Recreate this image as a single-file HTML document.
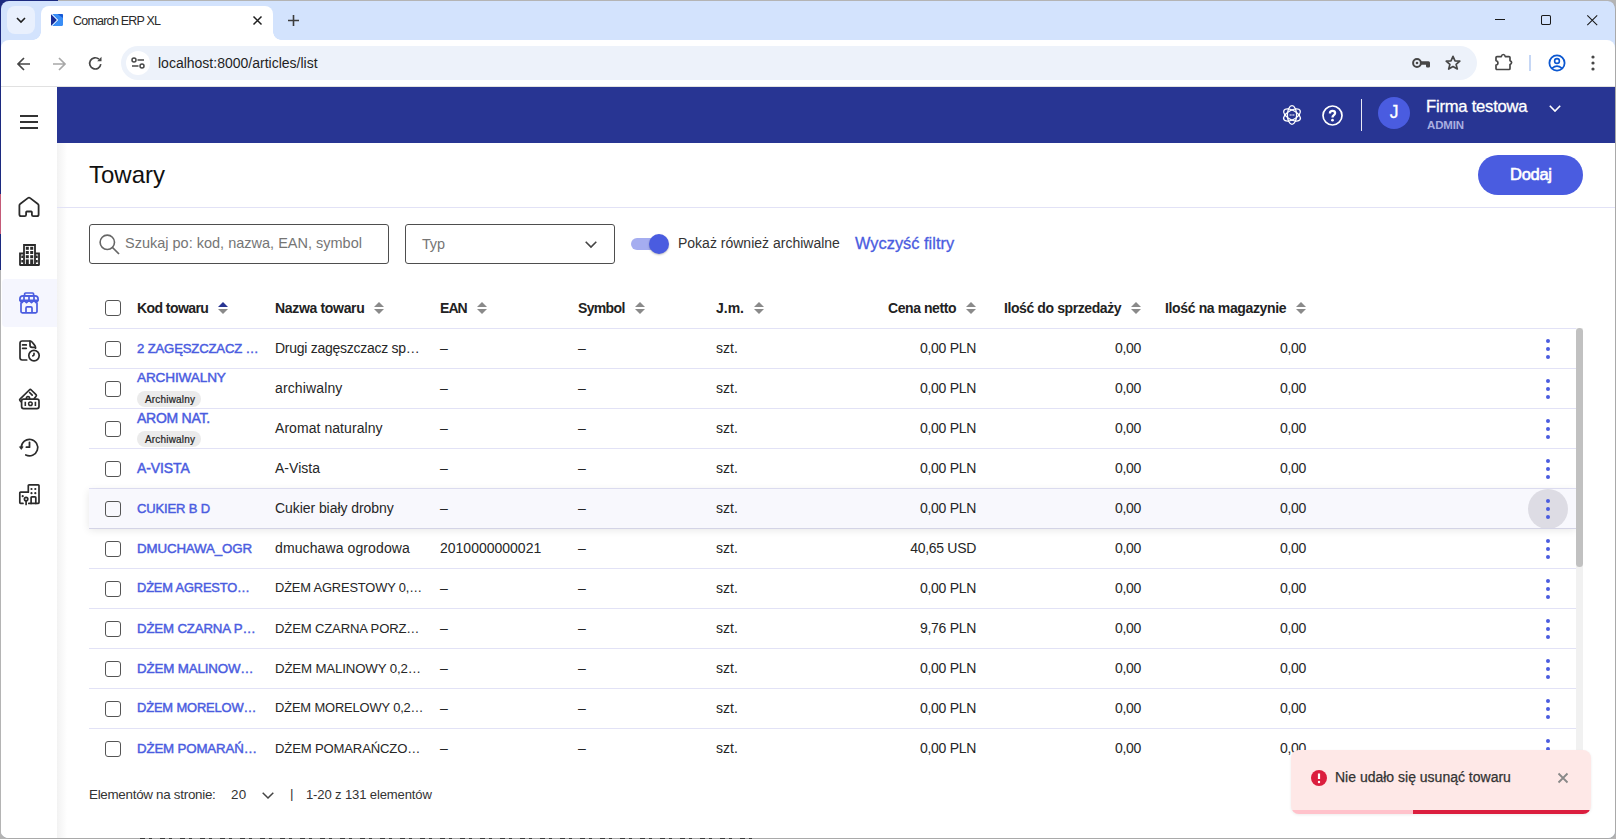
<!DOCTYPE html>
<html><head><meta charset="utf-8">
<style>
*{box-sizing:border-box;margin:0;padding:0}
html,body{width:1616px;height:839px;overflow:hidden;background:#b4b4b4;font-family:"Liberation Sans",sans-serif;position:relative}
.abs{position:absolute}
#topstrip{position:absolute;left:0;top:0;width:58px;height:20px;background:#1c2a80}
#leftstrip{position:absolute;left:0;top:0;width:1px;height:270px;background:#1c2a80}
#redstrip{position:absolute;left:0;top:194px;width:1px;height:40px;background:#c45a78}
#win{position:absolute;left:1px;top:1px;width:1615px;height:838px;background:#d3e3fd;border-radius:8px;overflow:hidden;border-right:1px solid #a9a9a9;border-bottom:1px solid #a9a9a9}
#pg{position:absolute;left:-1px;top:-1px;width:1616px;height:839px}
.t{position:absolute;white-space:nowrap;line-height:1}
svg{position:absolute;overflow:visible}
</style></head>
<body>
<div id="topstrip"></div><div id="leftstrip"></div><div id="redstrip"></div>
<div id="win"><div id="pg">
  <!-- TAB STRIP -->
  <div class="abs" style="left:7px;top:6px;width:28px;height:28px;border-radius:8px;background:#e9f0fd"></div>
  <svg style="left:16px;top:17px" width="10" height="6" viewBox="0 0 10 6"><path d="M1 1 L5 5 L9 1" fill="none" stroke="#1f1f1f" stroke-width="1.6"/></svg>
  <div class="abs" style="left:41px;top:6px;width:232px;height:35px;background:#fff;border-radius:8px 8px 0 0"></div>
  <div class="abs" style="left:33px;top:32px;width:8px;height:8px;background:radial-gradient(circle at 0 0,#d3e3fd 7.5px,#fff 8px)"></div>
  <div class="abs" style="left:273px;top:32px;width:8px;height:8px;background:radial-gradient(circle at 100% 0,#d3e3fd 7.5px,#fff 8px)"></div>
  <svg style="left:51px;top:14px" width="12" height="12" viewBox="0 0 12 12"><rect x="0" y="0" width="12" height="12" rx="1.5" fill="#3a8ef6"/><path d="M6.5 0 H11 Q12 0 12 1 V4 Z" fill="#1558d6"/><path d="M0 0 L6 6 L0 12 Z" fill="#1a2c96"/><path d="M0 0 L1.2 0 L7.2 6 L1.2 12 L0 12 L6 6Z" fill="#fff"/></svg>
  <div class="t" style="left:73px;top:15px;font-size:12.5px;letter-spacing:-0.8px;color:#2a2a2a">Comarch ERP XL</div>
  <svg style="left:253px;top:16px" width="9" height="9" viewBox="0 0 9 9"><path d="M0.5 0.5 L8.5 8.5 M8.5 0.5 L0.5 8.5" stroke="#1f1f1f" stroke-width="1.5"/></svg>
  <svg style="left:288px;top:15px" width="11" height="11" viewBox="0 0 11 11"><path d="M5.5 0 V11 M0 5.5 H11" stroke="#3c3c3c" stroke-width="1.6"/></svg>
  <!-- window controls -->
  <svg style="left:1495px;top:19px" width="11" height="1"><path d="M0 0.5 H10" stroke="#1a1a1a" stroke-width="1"/></svg>
  <svg style="left:1541px;top:15px" width="11" height="11"><rect x="0.5" y="0.5" width="9" height="9" rx="1.2" fill="none" stroke="#1a1a1a" stroke-width="1.05"/></svg>
  <svg style="left:1587px;top:15px" width="11" height="11"><path d="M0.3 0.3 L10.2 10.2 M10.2 0.3 L0.3 10.2" stroke="#1a1a1a" stroke-width="1.05"/></svg>

  <!-- TOOLBAR -->
  <div class="abs" style="left:1px;top:40px;width:1614px;height:47px;background:#fff;border-radius:8px 8px 0 0"></div>
  <div class="abs" style="left:41px;top:30px;width:232px;height:12px;background:#fff"></div>
  <div class="abs" style="left:1px;top:86px;width:1614px;height:1px;background:#e1e1e1"></div>
  <svg style="left:17px;top:57px" width="14" height="14" viewBox="0 0 14 14"><path d="M13 7 H1.5 M7 1 L1 7 L7 13" fill="none" stroke="#474747" stroke-width="1.7"/></svg>
  <svg style="left:52px;top:57px" width="14" height="14" viewBox="0 0 14 14"><path d="M1 7 H12.5 M7 1 L13 7 L7 13" fill="none" stroke="#a8a8a8" stroke-width="1.7"/></svg>
  <svg style="left:88px;top:56px" width="15" height="15" viewBox="0 0 15 15"><path d="M12.8 8.2 A5.6 5.6 0 1 1 11 3.2" fill="none" stroke="#474747" stroke-width="1.7"/><path d="M13.5 0.8 V5.2 H9.2 Z" fill="#474747"/></svg>
  <div class="abs" style="left:121px;top:46px;width:1356px;height:34px;border-radius:17px;background:#edf2fa"></div>
  <div class="abs" style="left:126px;top:51px;width:24px;height:24px;border-radius:12px;background:#fff"></div>
  <svg style="left:131px;top:57px" width="14" height="12" viewBox="0 0 14 12"><circle cx="3" cy="3" r="2" fill="none" stroke="#474747" stroke-width="1.5"/><path d="M6.5 3 H13" stroke="#474747" stroke-width="1.5"/><circle cx="11" cy="9" r="2" fill="none" stroke="#474747" stroke-width="1.5"/><path d="M1 9 H7.5" stroke="#474747" stroke-width="1.5"/></svg>
  <div class="t" style="left:158px;top:56px;font-size:14px;color:#1f1f1f">localhost:8000/articles/list</div>
  <svg style="left:1412px;top:58px" width="19" height="11" viewBox="0 0 19 11"><circle cx="5" cy="5" r="3.9" fill="none" stroke="#474747" stroke-width="2"/><circle cx="5" cy="5" r="1.3" fill="#474747"/><path d="M8.5 3.3 H16.5 Q18 3.3 18 4.8 V8.3 Q18 9.6 16.8 9.6 H15.2 Q14 9.6 14 8.3 V6.7 H8.5 Z" fill="#474747"/></svg>
  <svg style="left:1445px;top:55px" width="16" height="15" viewBox="0 0 16 15"><path d="M8 1.3 L10 5.9 L14.8 6.2 L11.1 9.4 L12.3 14 L8 11.5 L3.7 14 L4.9 9.4 L1.2 6.2 L6 5.9Z" fill="none" stroke="#474747" stroke-width="1.7" stroke-linejoin="round"/></svg>
  <svg style="left:1495px;top:53px" width="18" height="18" viewBox="0 0 18 18"><path d="M2 3.6 H6.3 Q6.8 1.5 8.3 1.5 Q9.8 1.5 10.3 3.6 H14 Q15 3.6 15 4.6 V7.6 Q16.6 8.3 16.6 9.6 Q16.6 10.9 15 11.6 V15.5 Q15 16.5 14 16.5 H2 Q1 16.5 1 15.5 V12.2 Q3 11.8 3 9.9 Q3 8 1 7.6 V4.6 Q1 3.6 2 3.6 Z" fill="none" stroke="#474747" stroke-width="1.7" stroke-linejoin="round"/></svg>
  <div class="abs" style="left:1529px;top:55px;width:1.5px;height:16px;background:#c6d7f5"></div>
  <svg style="left:1548px;top:54px" width="18" height="18" viewBox="0 0 18 18"><circle cx="9" cy="9" r="7.6" fill="none" stroke="#0b57d0" stroke-width="1.8"/><circle cx="9" cy="7" r="2.4" fill="none" stroke="#0b57d0" stroke-width="1.6"/><path d="M4.2 14.2 Q9 10.2 13.8 14.2" fill="none" stroke="#0b57d0" stroke-width="1.6"/></svg>
  <svg style="left:1590px;top:55px" width="6" height="16"><circle cx="3" cy="2" r="1.6" fill="#474747"/><circle cx="3" cy="8" r="1.6" fill="#474747"/><circle cx="3" cy="14" r="1.6" fill="#474747"/></svg>

  <!-- APP -->
  <div class="abs" style="left:1px;top:87px;width:1614px;height:752px;background:#fff"></div>
<div class="abs" style="left:1px;top:87px;width:56px;height:752px;background:#fff"></div>
<div class="abs" style="left:57px;top:143px;width:10px;height:696px;background:linear-gradient(90deg,#f2f2f2,#fff)"></div>
<div class="abs" style="left:57px;top:87px;width:1558px;height:56px;background:#283593"></div>
<svg style="left:20px;top:115px" width="18" height="14"><path d="M0 1 H18 M0 7 H18 M0 13 H18" stroke="#333" stroke-width="2"/></svg>
<div class="abs" style="left:2px;top:279px;width:55px;height:48px;background:#f5f6fe;border-radius:4px 0 0 4px"></div>
<svg style="left:18px;top:196px" width="22" height="22" viewBox="0 0 22 22"><path d="M1.4 9.4 Q1.4 8.5 2.1 8 L9.8 2.1 Q11 1.2 12.2 2.1 L19.9 8 Q20.6 8.5 20.6 9.4 V18.5 Q20.6 20.2 18.9 20.2 H15.3 Q13.9 20.2 13.9 18.8 V16.3 Q13.9 15.5 13.1 15.5 H8.9 Q8.1 15.5 8.1 16.3 V18.8 Q8.1 20.2 6.7 20.2 H3.1 Q1.4 20.2 1.4 18.5 Z" fill="none" stroke="#2b2b2b" stroke-width="1.8" stroke-linejoin="round"/></svg>
<svg style="left:19px;top:244px" width="21" height="22" viewBox="0 0 21 22"><path d="M5 21 V1 H16 V21 M1 21 V9.5 H5 M16 9.5 H20 V21 M0.5 21 H20.5" fill="none" stroke="#2b2b2b" stroke-width="1.8"/><g fill="#2b2b2b"><rect x="6.8" y="2.8" width="3" height="3"/><rect x="11.2" y="2.8" width="3" height="3"/><rect x="6.8" y="7" width="3" height="3"/><rect x="11.2" y="7" width="3" height="3"/><rect x="6.8" y="11.2" width="3" height="3"/><rect x="11.2" y="11.2" width="3" height="3"/><rect x="6.8" y="15.4" width="3" height="5"/><rect x="11.2" y="15.4" width="3" height="5"/><rect x="2.3" y="11.5" width="2" height="2.5"/><rect x="2.3" y="16" width="2" height="2.5"/><rect x="16.7" y="11.5" width="2" height="2.5"/><rect x="16.7" y="16" width="2" height="2.5"/></g></svg>
<svg style="left:19px;top:292px" width="21" height="22" viewBox="0 0 21 22"><g fill="none" stroke="#4a5ce0" stroke-width="1.7" stroke-linejoin="round" stroke-linecap="round"><rect x="5.6" y="1" width="9" height="2.8" rx="1"/><path d="M0.9 8.4 V7 Q0.9 3.8 4.1 3.8 H15.9 Q19.1 3.8 19.1 7 V8.4 Z M0.9 8.4 L2.95 10.6 L5 8.4 L7.5 10.6 L10 8.4 L12.5 10.6 L15 8.4 L17.05 10.6 L19.1 8.4 M5 3.8 V8.4 M10 3.8 V8.4 M15 3.8 V8.4"/><path d="M2 11.2 V19.6 Q2 20.9 3.3 20.9 H16.7 Q18 20.9 18 19.6 V11.2 M7 20.9 V16 Q7 14.8 8.2 14.8 H11.8 Q13 14.8 13 16 V20.9"/></g></svg>
<svg style="left:19px;top:340px" width="21" height="22" viewBox="0 0 21 22"><g fill="none" stroke="#2b2b2b" stroke-width="1.7" stroke-linecap="round" stroke-linejoin="round"><path d="M7.7 20 H3.2 Q1 20 1 17.8 V3.2 Q1 1 3.2 1 H10.8 Q12.1 1 13 2 L15.6 5.1 Q16.5 6.1 16.5 7.6 V8.2"/><path d="M11 1.2 V5.3 Q11 7.3 13 7.3 H16.3"/><path d="M3.6 4.9 H7.3 M3.6 8.3 H7.3"/><circle cx="15" cy="15.6" r="5.2"/><path d="M15 13.3 V14.6 Q15 15.8 13.8 15.8"/></g></svg>
<svg style="left:19px;top:389px" width="21" height="21" viewBox="0 0 21 21"><path d="M2.3 12.8 L1 11.6 Q0.3 10.9 1 10.2 L10.3 1 Q11.3 0 12.3 1 L17 5.7 Q17.8 6.5 17.1 7.3 L15.2 9.6 M7.3 10 Q7.3 7.5 9 7.5 Q10.7 7.5 10.7 10 M10.6 3.5 L13.2 6.1" fill="none" stroke="#2b2b2b" stroke-width="1.7" stroke-linejoin="round" stroke-linecap="round"/><rect x="2.6" y="10.2" width="17.4" height="9.4" rx="2" fill="none" stroke="#2b2b2b" stroke-width="1.7"/><path d="M6.3 12.7 V17 M16.4 12.7 V17" stroke="#2b2b2b" stroke-width="1.6"/><circle cx="11.4" cy="14.8" r="1.8" fill="none" stroke="#2b2b2b" stroke-width="1.5"/></svg>
<svg style="left:19px;top:437px" width="21" height="21" viewBox="0 0 21 21"><path d="M2.3 10.3 A8.2 8.2 0 1 1 6.8 17.9" fill="none" stroke="#2b2b2b" stroke-width="1.7" stroke-linecap="round"/><path d="M10.5 5.3 V10.2 H7.4" fill="none" stroke="#2b2b2b" stroke-width="1.8" stroke-linecap="round" stroke-linejoin="round"/><path d="M0.5 9.8 L4.1 9.8 L2.3 12.4 Z" fill="#2b2b2b" stroke="#2b2b2b" stroke-width="0.8" stroke-linejoin="round"/></svg>
<svg style="left:19px;top:484px" width="21" height="21" viewBox="0 0 21 21"><g fill="none" stroke="#2b2b2b" stroke-width="1.7" stroke-linecap="round" stroke-linejoin="round"><path d="M9.3 8.2 V1.6 Q9.3 0.8 10.1 0.8 H19.2 Q20 0.8 20 1.6 V18.6 Q20 19.4 19.2 19.4 H9.8"/><path d="M9.3 8.2 H1.6 Q0.8 8.2 0.8 9 V18.6 Q0.8 19.4 1.6 19.4 H4"/><path d="M12.1 19.4 V13.6 Q12.1 12.8 12.9 12.8 H16 Q16.8 12.8 16.8 13.6 V19.4"/><circle cx="7.1" cy="15.1" r="1.7"/><path d="M7.1 16.8 V20.4"/></g><g fill="#2b2b2b"><circle cx="12.5" cy="5" r="1.1"/><circle cx="16.3" cy="5" r="1.1"/><circle cx="12.5" cy="9.2" r="1.1"/><circle cx="16.3" cy="9.2" r="1.1"/><circle cx="3.7" cy="12.2" r="1.1"/></g></svg>
<svg style="left:1282px;top:105px" width="20" height="20" viewBox="0 0 20 20"><g fill="none" stroke="#fff" stroke-width="1.3"><ellipse cx="10" cy="10" rx="9.3" ry="4.6" transform="rotate(90 10 10)"/><ellipse cx="10" cy="10" rx="9.3" ry="4.6" transform="rotate(30 10 10)"/><ellipse cx="10" cy="10" rx="9.3" ry="4.6" transform="rotate(-30 10 10)"/></g><circle cx="8.2" cy="10" r="0.7" fill="#fff"/><circle cx="10" cy="10" r="0.7" fill="#fff"/><circle cx="11.8" cy="10" r="0.7" fill="#fff"/></svg>
<svg style="left:1322px;top:105px" width="21" height="21" viewBox="0 0 21 21"><circle cx="10.5" cy="10.5" r="9.5" fill="none" stroke="#fff" stroke-width="1.7"/><path d="M7.9 8.4 Q7.9 5.8 10.5 5.8 Q13.1 5.8 13.1 8.1 Q13.1 9.5 11.5 10.4 Q10.5 11 10.5 12.4" fill="none" stroke="#fff" stroke-width="2.3"/><circle cx="10.5" cy="15.2" r="1.35" fill="#fff"/></svg>
<div class="abs" style="left:1360.5px;top:99px;width:1.5px;height:32px;background:#e8e9f5"></div>
<div class="abs" style="left:1378px;top:97px;width:32px;height:32px;border-radius:16px;background:#4a5ce0"></div>
<div class="t" style="left:1378px;top:104px;width:32px;text-align:center;font-size:17.5px;color:#fff;-webkit-text-stroke:0.3px #fff">J</div>
<div class="t" style="left:1426px;top:98.50px;font-size:16.6px;color:#fff;-webkit-text-stroke:0.3px #fff;letter-spacing:-0.217px">Firma testowa</div>
<div class="t" style="left:1427px;top:119.50px;font-size:11.47px;font-weight:700;color:#a9aee0;letter-spacing:-0.150px">ADMIN</div>
<svg style="left:1549px;top:105px" width="12" height="8" viewBox="0 0 12 8"><path d="M0.8 0.8 L6 6 L11.2 0.8" fill="none" stroke="#fff" stroke-width="1.6"/></svg>
<div class="t" style="left:89px;top:163px;font-size:24px;color:#111">Towary</div>
<div class="abs" style="left:1478px;top:155px;width:105px;height:40px;border-radius:20px;background:#4a5ce0"></div>
<div class="t" style="left:1510px;top:166.00px;font-size:16.5px;color:#fff;-webkit-text-stroke:0.6px #fff;letter-spacing:-0.281px">Dodaj</div>
<div class="abs" style="left:57px;top:207px;width:1558px;height:1px;background:#e2e2f6"></div>
<div class="abs" style="left:89px;top:224px;width:300px;height:40px;border:1.5px solid #4e4e4e;border-radius:3px"></div>
<svg style="left:99px;top:234px" width="21" height="21" viewBox="0 0 21 21"><circle cx="8.3" cy="8.3" r="7.2" fill="none" stroke="#666" stroke-width="1.6"/><path d="M13.5 13.5 L20 20" stroke="#666" stroke-width="1.7"/></svg>
<div class="t" style="left:125px;top:236px;font-size:14.5px;color:#757575">Szukaj po: kod, nazwa, EAN, symbol</div>
<div class="abs" style="left:405px;top:224px;width:210px;height:40px;border:1.5px solid #4e4e4e;border-radius:3px"></div>
<div class="t" style="left:422px;top:237.00px;font-size:14.45px;color:#757575;letter-spacing:-0.150px">Typ</div>
<svg style="left:585px;top:241px" width="12" height="7" viewBox="0 0 12 7"><path d="M0.7 0.7 L6 6 L11.3 0.7" fill="none" stroke="#444" stroke-width="1.6"/></svg>
<div class="abs" style="left:631px;top:238px;width:36px;height:12px;border-radius:6px;background:#a5adf0"></div>
<div class="abs" style="left:649px;top:234px;width:20px;height:20px;border-radius:10px;background:#4a5ce0;box-shadow:0 1px 2px rgba(0,0,0,.25)"></div>
<div class="t" style="left:678px;top:236px;font-size:14px;color:#333">Pokaż również archiwalne</div>
<div class="t" style="left:855px;top:235px;font-size:16.4px;color:#4a5ce0;-webkit-text-stroke:0.3px #4a5ce0">Wyczyść filtry</div>
<div class="abs" style="left:105px;top:300px;width:16px;height:16px;border:1.6px solid #555;border-radius:3px"></div>
<div class="t" style="left:137px;top:301.00px;font-size:14px;font-weight:700;color:#222;letter-spacing:-0.567px">Kod towaru</div>
<svg style="left:218px;top:302px" width="10" height="12" viewBox="0 0 10 12"><path d="M5 0 L10 5 H0Z" fill="#283593"/><path d="M5 12 L10 7 H0Z" fill="#8a8a8a"/></svg>
<div class="t" style="left:275px;top:301.00px;font-size:14px;font-weight:700;color:#222;letter-spacing:-0.324px">Nazwa towaru</div>
<svg style="left:374px;top:302px" width="10" height="12" viewBox="0 0 10 12"><path d="M5 0 L10 5 H0Z" fill="#8a8a8a"/><path d="M5 12 L10 7 H0Z" fill="#8a8a8a"/></svg>
<div class="t" style="left:440px;top:301.00px;font-size:14px;font-weight:700;color:#222;letter-spacing:-0.931px">EAN</div>
<svg style="left:477px;top:302px" width="10" height="12" viewBox="0 0 10 12"><path d="M5 0 L10 5 H0Z" fill="#8a8a8a"/><path d="M5 12 L10 7 H0Z" fill="#8a8a8a"/></svg>
<div class="t" style="left:578px;top:301.00px;font-size:14px;font-weight:700;color:#222;letter-spacing:-0.656px">Symbol</div>
<svg style="left:635px;top:302px" width="10" height="12" viewBox="0 0 10 12"><path d="M5 0 L10 5 H0Z" fill="#8a8a8a"/><path d="M5 12 L10 7 H0Z" fill="#8a8a8a"/></svg>
<div class="t" style="left:716px;top:301.00px;font-size:14px;font-weight:700;color:#222;letter-spacing:-0.005px">J.m.</div>
<svg style="left:754px;top:302px" width="10" height="12" viewBox="0 0 10 12"><path d="M5 0 L10 5 H0Z" fill="#8a8a8a"/><path d="M5 12 L10 7 H0Z" fill="#8a8a8a"/></svg>
<div class="t" style="left:888px;top:301.00px;font-size:14px;font-weight:700;color:#222;letter-spacing:-0.427px">Cena netto</div>
<svg style="left:966px;top:302px" width="10" height="12" viewBox="0 0 10 12"><path d="M5 0 L10 5 H0Z" fill="#8a8a8a"/><path d="M5 12 L10 7 H0Z" fill="#8a8a8a"/></svg>
<div class="t" style="left:1004px;top:301.00px;font-size:14px;font-weight:700;color:#222;letter-spacing:-0.405px">Ilość do sprzedaży</div>
<svg style="left:1131px;top:302px" width="10" height="12" viewBox="0 0 10 12"><path d="M5 0 L10 5 H0Z" fill="#8a8a8a"/><path d="M5 12 L10 7 H0Z" fill="#8a8a8a"/></svg>
<div class="t" style="left:1165px;top:301.00px;font-size:14px;font-weight:700;color:#222;letter-spacing:-0.359px">Ilość na magazynie</div>
<svg style="left:1296px;top:302px" width="10" height="12" viewBox="0 0 10 12"><path d="M5 0 L10 5 H0Z" fill="#8a8a8a"/><path d="M5 12 L10 7 H0Z" fill="#8a8a8a"/></svg>
<div class="abs" style="left:89px;top:328px;width:1487px;height:1px;background:#e2e2f6"></div>
<div class="abs" style="left:57px;top:329px;width:1530px;height:439px;overflow:hidden">
<div class="abs" style="left:48px;top:12px;width:16px;height:16px;border:1.6px solid #555;border-radius:3px"></div>
<div class="t" style="left:80px;top:13.00px;font-size:13.11px;color:#4a5ce0;-webkit-text-stroke:0.45px #4a5ce0;letter-spacing:-0.150px">2 ZAGĘSZCZACZ …</div>
<div class="t" style="left:218px;top:12.00px;font-size:14px;color:#262626;letter-spacing:-0.269px">Drugi zagęszczacz sp…</div>
<div class="t" style="left:383px;top:12px;font-size:14px;color:#262626">–</div>
<div class="t" style="left:521px;top:12px;font-size:14px;color:#262626">–</div>
<div class="t" style="left:659px;top:12px;font-size:14px;color:#262626">szt.</div>
<div class="t" style="right:611px;top:12px;font-size:14px;color:#262626;letter-spacing:-0.3px">0,00 PLN</div>
<div class="t" style="right:446px;top:12px;font-size:14px;color:#262626;letter-spacing:-0.3px">0,00</div>
<div class="t" style="right:281px;top:12px;font-size:14px;color:#262626;letter-spacing:-0.3px">0,00</div>
<svg style="left:1489px;top:10px" width="4" height="20"><circle cx="2" cy="2" r="2" fill="#4a5ce0"/><circle cx="2" cy="10" r="2" fill="#4a5ce0"/><circle cx="2" cy="18" r="2" fill="#4a5ce0"/></svg>
<div class="abs" style="left:32px;top:39px;width:1487px;height:1px;background:#e2e2f6"></div>
<div class="abs" style="left:48px;top:52px;width:16px;height:16px;border:1.6px solid #555;border-radius:3px"></div>
<div class="t" style="left:80px;top:42.00px;font-size:13.61px;color:#4a5ce0;-webkit-text-stroke:0.45px #4a5ce0;letter-spacing:-0.150px">ARCHIWALNY</div>
<div class="abs" style="left:80px;top:62px;width:64px;height:16px;border-radius:8px;background:#ebebeb"></div>
<div class="t" style="left:88px;top:66.00px;font-size:10px;color:#222;-webkit-text-stroke:0.2px #222;letter-spacing:0.171px">Archiwalny</div>
<div class="t" style="left:218px;top:52.00px;font-size:14px;color:#262626;letter-spacing:0.129px">archiwalny</div>
<div class="t" style="left:383px;top:52px;font-size:14px;color:#262626">–</div>
<div class="t" style="left:521px;top:52px;font-size:14px;color:#262626">–</div>
<div class="t" style="left:659px;top:52px;font-size:14px;color:#262626">szt.</div>
<div class="t" style="right:611px;top:52px;font-size:14px;color:#262626;letter-spacing:-0.3px">0,00 PLN</div>
<div class="t" style="right:446px;top:52px;font-size:14px;color:#262626;letter-spacing:-0.3px">0,00</div>
<div class="t" style="right:281px;top:52px;font-size:14px;color:#262626;letter-spacing:-0.3px">0,00</div>
<svg style="left:1489px;top:50px" width="4" height="20"><circle cx="2" cy="2" r="2" fill="#4a5ce0"/><circle cx="2" cy="10" r="2" fill="#4a5ce0"/><circle cx="2" cy="18" r="2" fill="#4a5ce0"/></svg>
<div class="abs" style="left:32px;top:79px;width:1487px;height:1px;background:#e2e2f6"></div>
<div class="abs" style="left:48px;top:92px;width:16px;height:16px;border:1.6px solid #555;border-radius:3px"></div>
<div class="t" style="left:80px;top:82.00px;font-size:14px;color:#4a5ce0;-webkit-text-stroke:0.45px #4a5ce0;letter-spacing:-0.263px">AROM NAT.</div>
<div class="abs" style="left:80px;top:102px;width:64px;height:16px;border-radius:8px;background:#ebebeb"></div>
<div class="t" style="left:88px;top:106.00px;font-size:10px;color:#222;-webkit-text-stroke:0.2px #222;letter-spacing:0.171px">Archiwalny</div>
<div class="t" style="left:218px;top:92.00px;font-size:14px;color:#262626;letter-spacing:0.059px">Aromat naturalny</div>
<div class="t" style="left:383px;top:92px;font-size:14px;color:#262626">–</div>
<div class="t" style="left:521px;top:92px;font-size:14px;color:#262626">–</div>
<div class="t" style="left:659px;top:92px;font-size:14px;color:#262626">szt.</div>
<div class="t" style="right:611px;top:92px;font-size:14px;color:#262626;letter-spacing:-0.3px">0,00 PLN</div>
<div class="t" style="right:446px;top:92px;font-size:14px;color:#262626;letter-spacing:-0.3px">0,00</div>
<div class="t" style="right:281px;top:92px;font-size:14px;color:#262626;letter-spacing:-0.3px">0,00</div>
<svg style="left:1489px;top:90px" width="4" height="20"><circle cx="2" cy="2" r="2" fill="#4a5ce0"/><circle cx="2" cy="10" r="2" fill="#4a5ce0"/><circle cx="2" cy="18" r="2" fill="#4a5ce0"/></svg>
<div class="abs" style="left:32px;top:119px;width:1487px;height:1px;background:#e2e2f6"></div>
<div class="abs" style="left:48px;top:132px;width:16px;height:16px;border:1.6px solid #555;border-radius:3px"></div>
<div class="t" style="left:80px;top:132.00px;font-size:14px;color:#4a5ce0;-webkit-text-stroke:0.45px #4a5ce0;letter-spacing:-0.104px">A-VISTA</div>
<div class="t" style="left:218px;top:132.00px;font-size:14px;color:#262626;letter-spacing:0.021px">A-Vista</div>
<div class="t" style="left:383px;top:132px;font-size:14px;color:#262626">–</div>
<div class="t" style="left:521px;top:132px;font-size:14px;color:#262626">–</div>
<div class="t" style="left:659px;top:132px;font-size:14px;color:#262626">szt.</div>
<div class="t" style="right:611px;top:132px;font-size:14px;color:#262626;letter-spacing:-0.3px">0,00 PLN</div>
<div class="t" style="right:446px;top:132px;font-size:14px;color:#262626;letter-spacing:-0.3px">0,00</div>
<div class="t" style="right:281px;top:132px;font-size:14px;color:#262626;letter-spacing:-0.3px">0,00</div>
<svg style="left:1489px;top:130px" width="4" height="20"><circle cx="2" cy="2" r="2" fill="#4a5ce0"/><circle cx="2" cy="10" r="2" fill="#4a5ce0"/><circle cx="2" cy="18" r="2" fill="#4a5ce0"/></svg>
<div class="abs" style="left:32px;top:159px;width:1487px;height:1px;background:#e2e2f6"></div>
<div class="abs" style="left:32px;top:160px;width:1487px;height:39px;background:#f8f8fd;box-shadow:0 2px 8px rgba(0,0,0,.10)"></div>
<div class="abs" style="left:1471px;top:160px;width:40px;height:40px;border-radius:20px;background:#dddce4"></div>
<div class="abs" style="left:48px;top:172px;width:16px;height:16px;border:1.6px solid #555;border-radius:3px"></div>
<div class="t" style="left:80px;top:173.00px;font-size:13.04px;color:#4a5ce0;-webkit-text-stroke:0.45px #4a5ce0;letter-spacing:-0.150px">CUKIER B D</div>
<div class="t" style="left:218px;top:172.00px;font-size:14px;color:#262626;letter-spacing:-0.064px">Cukier biały drobny</div>
<div class="t" style="left:383px;top:172px;font-size:14px;color:#262626">–</div>
<div class="t" style="left:521px;top:172px;font-size:14px;color:#262626">–</div>
<div class="t" style="left:659px;top:172px;font-size:14px;color:#262626">szt.</div>
<div class="t" style="right:611px;top:172px;font-size:14px;color:#262626;letter-spacing:-0.3px">0,00 PLN</div>
<div class="t" style="right:446px;top:172px;font-size:14px;color:#262626;letter-spacing:-0.3px">0,00</div>
<div class="t" style="right:281px;top:172px;font-size:14px;color:#262626;letter-spacing:-0.3px">0,00</div>
<svg style="left:1489px;top:170px" width="4" height="20"><circle cx="2" cy="2" r="2" fill="#4a5ce0"/><circle cx="2" cy="10" r="2" fill="#4a5ce0"/><circle cx="2" cy="18" r="2" fill="#4a5ce0"/></svg>
<div class="abs" style="left:32px;top:199px;width:1487px;height:1px;background:#d4d4e6"></div>
<div class="abs" style="left:48px;top:212px;width:16px;height:16px;border:1.6px solid #555;border-radius:3px"></div>
<div class="t" style="left:80px;top:213.00px;font-size:13.34px;color:#4a5ce0;-webkit-text-stroke:0.45px #4a5ce0;letter-spacing:-0.150px">DMUCHAWA_OGR</div>
<div class="t" style="left:218px;top:212.00px;font-size:14px;color:#262626;letter-spacing:0.107px">dmuchawa ogrodowa</div>
<div class="t" style="left:383px;top:212px;font-size:14px;color:#262626">2010000000021</div>
<div class="t" style="left:521px;top:212px;font-size:14px;color:#262626">–</div>
<div class="t" style="left:659px;top:212px;font-size:14px;color:#262626">szt.</div>
<div class="t" style="right:611px;top:212px;font-size:14px;color:#262626;letter-spacing:-0.3px">40,65 USD</div>
<div class="t" style="right:446px;top:212px;font-size:14px;color:#262626;letter-spacing:-0.3px">0,00</div>
<div class="t" style="right:281px;top:212px;font-size:14px;color:#262626;letter-spacing:-0.3px">0,00</div>
<svg style="left:1489px;top:210px" width="4" height="20"><circle cx="2" cy="2" r="2" fill="#4a5ce0"/><circle cx="2" cy="10" r="2" fill="#4a5ce0"/><circle cx="2" cy="18" r="2" fill="#4a5ce0"/></svg>
<div class="abs" style="left:32px;top:239px;width:1487px;height:1px;background:#e2e2f6"></div>
<div class="abs" style="left:48px;top:252px;width:16px;height:16px;border:1.6px solid #555;border-radius:3px"></div>
<div class="t" style="left:80px;top:253.00px;font-size:12.85px;color:#4a5ce0;-webkit-text-stroke:0.45px #4a5ce0;letter-spacing:-0.150px">DŻEM AGRESTO…</div>
<div class="t" style="left:218px;top:253.00px;font-size:12.86px;color:#262626;letter-spacing:-0.150px">DŻEM AGRESTOWY 0,…</div>
<div class="t" style="left:383px;top:252px;font-size:14px;color:#262626">–</div>
<div class="t" style="left:521px;top:252px;font-size:14px;color:#262626">–</div>
<div class="t" style="left:659px;top:252px;font-size:14px;color:#262626">szt.</div>
<div class="t" style="right:611px;top:252px;font-size:14px;color:#262626;letter-spacing:-0.3px">0,00 PLN</div>
<div class="t" style="right:446px;top:252px;font-size:14px;color:#262626;letter-spacing:-0.3px">0,00</div>
<div class="t" style="right:281px;top:252px;font-size:14px;color:#262626;letter-spacing:-0.3px">0,00</div>
<svg style="left:1489px;top:250px" width="4" height="20"><circle cx="2" cy="2" r="2" fill="#4a5ce0"/><circle cx="2" cy="10" r="2" fill="#4a5ce0"/><circle cx="2" cy="18" r="2" fill="#4a5ce0"/></svg>
<div class="abs" style="left:32px;top:279px;width:1487px;height:1px;background:#e2e2f6"></div>
<div class="abs" style="left:48px;top:292px;width:16px;height:16px;border:1.6px solid #555;border-radius:3px"></div>
<div class="t" style="left:80px;top:293.00px;font-size:13.24px;color:#4a5ce0;-webkit-text-stroke:0.45px #4a5ce0;letter-spacing:-0.150px">DŻEM CZARNA P…</div>
<div class="t" style="left:218px;top:293.00px;font-size:13.09px;color:#262626;letter-spacing:-0.150px">DŻEM CZARNA PORZ…</div>
<div class="t" style="left:383px;top:292px;font-size:14px;color:#262626">–</div>
<div class="t" style="left:521px;top:292px;font-size:14px;color:#262626">–</div>
<div class="t" style="left:659px;top:292px;font-size:14px;color:#262626">szt.</div>
<div class="t" style="right:611px;top:292px;font-size:14px;color:#262626;letter-spacing:-0.3px">9,76 PLN</div>
<div class="t" style="right:446px;top:292px;font-size:14px;color:#262626;letter-spacing:-0.3px">0,00</div>
<div class="t" style="right:281px;top:292px;font-size:14px;color:#262626;letter-spacing:-0.3px">0,00</div>
<svg style="left:1489px;top:290px" width="4" height="20"><circle cx="2" cy="2" r="2" fill="#4a5ce0"/><circle cx="2" cy="10" r="2" fill="#4a5ce0"/><circle cx="2" cy="18" r="2" fill="#4a5ce0"/></svg>
<div class="abs" style="left:32px;top:319px;width:1487px;height:1px;background:#e2e2f6"></div>
<div class="abs" style="left:48px;top:332px;width:16px;height:16px;border:1.6px solid #555;border-radius:3px"></div>
<div class="t" style="left:80px;top:333.00px;font-size:13.34px;color:#4a5ce0;-webkit-text-stroke:0.45px #4a5ce0;letter-spacing:-0.150px">DŻEM MALINOW…</div>
<div class="t" style="left:218px;top:333.00px;font-size:13.26px;color:#262626;letter-spacing:-0.150px">DŻEM MALINOWY 0,2…</div>
<div class="t" style="left:383px;top:332px;font-size:14px;color:#262626">–</div>
<div class="t" style="left:521px;top:332px;font-size:14px;color:#262626">–</div>
<div class="t" style="left:659px;top:332px;font-size:14px;color:#262626">szt.</div>
<div class="t" style="right:611px;top:332px;font-size:14px;color:#262626;letter-spacing:-0.3px">0,00 PLN</div>
<div class="t" style="right:446px;top:332px;font-size:14px;color:#262626;letter-spacing:-0.3px">0,00</div>
<div class="t" style="right:281px;top:332px;font-size:14px;color:#262626;letter-spacing:-0.3px">0,00</div>
<svg style="left:1489px;top:330px" width="4" height="20"><circle cx="2" cy="2" r="2" fill="#4a5ce0"/><circle cx="2" cy="10" r="2" fill="#4a5ce0"/><circle cx="2" cy="18" r="2" fill="#4a5ce0"/></svg>
<div class="abs" style="left:32px;top:359px;width:1487px;height:1px;background:#e2e2f6"></div>
<div class="abs" style="left:48px;top:372px;width:16px;height:16px;border:1.6px solid #555;border-radius:3px"></div>
<div class="t" style="left:80px;top:373.00px;font-size:12.91px;color:#4a5ce0;-webkit-text-stroke:0.45px #4a5ce0;letter-spacing:-0.150px">DŻEM MORELOW…</div>
<div class="t" style="left:218px;top:373.00px;font-size:12.92px;color:#262626;letter-spacing:-0.150px">DŻEM MORELOWY 0,2…</div>
<div class="t" style="left:383px;top:372px;font-size:14px;color:#262626">–</div>
<div class="t" style="left:521px;top:372px;font-size:14px;color:#262626">–</div>
<div class="t" style="left:659px;top:372px;font-size:14px;color:#262626">szt.</div>
<div class="t" style="right:611px;top:372px;font-size:14px;color:#262626;letter-spacing:-0.3px">0,00 PLN</div>
<div class="t" style="right:446px;top:372px;font-size:14px;color:#262626;letter-spacing:-0.3px">0,00</div>
<div class="t" style="right:281px;top:372px;font-size:14px;color:#262626;letter-spacing:-0.3px">0,00</div>
<svg style="left:1489px;top:370px" width="4" height="20"><circle cx="2" cy="2" r="2" fill="#4a5ce0"/><circle cx="2" cy="10" r="2" fill="#4a5ce0"/><circle cx="2" cy="18" r="2" fill="#4a5ce0"/></svg>
<div class="abs" style="left:32px;top:399px;width:1487px;height:1px;background:#e2e2f6"></div>
<div class="abs" style="left:48px;top:412px;width:16px;height:16px;border:1.6px solid #555;border-radius:3px"></div>
<div class="t" style="left:80px;top:413.00px;font-size:13.29px;color:#4a5ce0;-webkit-text-stroke:0.45px #4a5ce0;letter-spacing:-0.150px">DŻEM POMARAŃ…</div>
<div class="t" style="left:218px;top:413.00px;font-size:13.09px;color:#262626;letter-spacing:-0.150px">DŻEM POMARAŃCZO…</div>
<div class="t" style="left:383px;top:412px;font-size:14px;color:#262626">–</div>
<div class="t" style="left:521px;top:412px;font-size:14px;color:#262626">–</div>
<div class="t" style="left:659px;top:412px;font-size:14px;color:#262626">szt.</div>
<div class="t" style="right:611px;top:412px;font-size:14px;color:#262626;letter-spacing:-0.3px">0,00 PLN</div>
<div class="t" style="right:446px;top:412px;font-size:14px;color:#262626;letter-spacing:-0.3px">0,00</div>
<div class="t" style="right:281px;top:412px;font-size:14px;color:#262626;letter-spacing:-0.3px">0,00</div>
<svg style="left:1489px;top:410px" width="4" height="20"><circle cx="2" cy="2" r="2" fill="#4a5ce0"/><circle cx="2" cy="10" r="2" fill="#4a5ce0"/><circle cx="2" cy="18" r="2" fill="#4a5ce0"/></svg>
</div>
<div class="abs" style="left:1576px;top:328px;width:7px;height:440px;background:#f1f1f1"></div>
<div class="abs" style="left:1576px;top:328px;width:7px;height:239px;border-radius:3.5px;background:#c1c1c1"></div>
<div class="t" style="left:89px;top:788.00px;font-size:13.4px;color:#333;letter-spacing:-0.285px">Elementów na stronie:</div>
<div class="t" style="left:231px;top:788.00px;font-size:13.4px;color:#333;letter-spacing:0.394px">20</div>
<svg style="left:262px;top:792px" width="12" height="7" viewBox="0 0 12 7"><path d="M0.7 0.7 L6 6 L11.3 0.7" fill="none" stroke="#444" stroke-width="1.5"/></svg>
<div class="t" style="left:290px;top:787px;font-size:13.4px;color:#333">|</div>
<div class="t" style="left:306px;top:788.00px;font-size:13.09px;color:#333;letter-spacing:-0.150px">1-20 z 131 elementów</div>
<div class="abs" style="left:1291px;top:750px;width:300px;height:64px;border-radius:8px;background:#fee8e7;overflow:hidden;box-shadow:0 1px 3px rgba(0,0,0,.08)"><div class="abs" style="left:0;top:60px;width:122px;height:4px;background:#ffc2cb"></div><div class="abs" style="left:122px;top:60px;width:178px;height:4px;background:#db1e3e"></div></div>
<svg style="left:1311px;top:770px" width="16" height="16" viewBox="0 0 16 16"><circle cx="8" cy="8" r="8" fill="#db1e3e"/><path d="M8 3.5 V9" stroke="#fff" stroke-width="2.2"/><circle cx="8" cy="12" r="1.2" fill="#fff"/></svg>
<div class="t" style="left:1335px;top:770px;font-size:14px;color:#333;-webkit-text-stroke:0.25px #333">Nie udało się usunąć towaru</div>
<svg style="left:1558px;top:773px" width="10" height="10"><path d="M0.5 0.5 L9.5 9.5 M9.5 0.5 L0.5 9.5" stroke="#888" stroke-width="1.8"/></svg>
</div></div>
<div style="position:absolute;left:140px;top:838px;width:620px;height:1px;background:repeating-linear-gradient(90deg,#3a3a3a 0 5px,transparent 5px 9px,#3a3a3a 9px 12px,transparent 12px 20px)"></div>
</body></html>
